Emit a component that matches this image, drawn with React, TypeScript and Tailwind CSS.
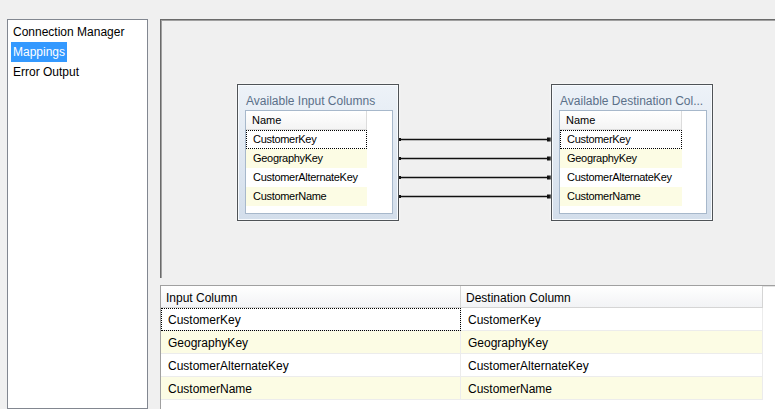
const menuItems = ["Connection Manager", "Mappings", "Error Output"];

const columns = [
  "CustomerKey",
  "GeographyKey",
  "CustomerAlternateKey",
  "CustomerName",
];

/* COLUMN BOX IN THE DIAGRAM */

function ColumnBox({ title, colWidth }: { title: string; colWidth: string }) {
  return (
    <div className="w-[162px] h-[137px] shrink-0 border border-[#4f5357] bg-gradient-to-b from-[#edf2f8] to-[#d3deeb] shadow-[inset_0_0_0_1px_#f8fbfe,0_0_2px_#ffffff] flex flex-col pl-[7px] pr-[5px] pb-[6px]">
      <div className="h-[25px] pt-[9px] pl-[1px] leading-[14px] text-[12px] text-[#5b7089] whitespace-nowrap overflow-hidden">
        {title}
      </div>

      <div className="flex-1 bg-white border border-[#a7b8cb]">
        <div
          className={`${colWidth} h-[19px] leading-[18px] pl-[6px] text-[11px] bg-gradient-to-b from-white to-[#f4f4f4] border-b border-r border-[#dcdcdc]`}
        >
          Name
        </div>

        {columns.map((name, i) => (
          <div
            key={name}
            className={`${colWidth} h-[19px] leading-[19px] pl-[7px] text-[11px] tracking-[-0.3px] ${
              i % 2 === 1 ? "bg-[#fcfce4]" : "bg-white"
            } ${
              i === 0
                ? "outline-1 outline-dotted outline-black -outline-offset-1"
                : ""
            }`}
          >
            {name}
          </div>
        ))}
      </div>
    </div>
  );
}

/* CONNECTOR LINES */

function Connectors() {
  const ys = [55.5, 74.5, 93.5, 112.5];

  return (
    <svg width="152" height="137" className="shrink-0">
      {ys.map((y) => (
        <g key={y}>
          <line x1="0" y1={y} x2="150" y2={y} stroke="#111" strokeWidth="1.4" />
          <rect x="0" y={y - 1.5} width="2" height="3" fill="#111" />
          <rect x="148" y={y - 2} width="4" height="4" fill="#111" />
        </g>
      ))}
    </svg>
  );
}

export default function App() {
  return (
    <div className="w-[775px] h-[409px] overflow-hidden bg-[#f0f0f0] flex pt-[19px] pl-[7px] font-['Liberation_Sans',Arial,sans-serif] text-[12px] text-black">

      {/* LEFT MENU */}

      <div className="w-[141px] h-[390px] shrink-0 bg-white border border-[#828790] pt-[2px]">
        {menuItems.map((item) => (
          <div key={item} className="h-[20px] leading-[20px] pl-[3px]">
            <span
              className={`px-[2px] inline-block ${
                item === "Mappings" ? "bg-[#3399ff] text-white" : ""
              }`}
            >
              {item}
            </span>
          </div>
        ))}
      </div>

      <div className="ml-[12px] flex-1 flex flex-col">

        {/* DIAGRAM CANVAS */}

        <div className="h-[259px] shrink-0 border-t border-l border-[#6a6a6a] shadow-[inset_1px_1px_0_#a0a0a0] pt-[64px] pl-[76px] flex items-start">
          <ColumnBox title="Available Input Columns" colWidth="w-[121px]" />
          <Connectors />
          <ColumnBox title="Available Destination Col..." colWidth="w-[122px]" />
        </div>

        {/* MAPPINGS GRID */}

        <div className="mt-[7px] flex-1 bg-white border-t border-l border-[#a0a0a0] shadow-[inset_0_1px_0_#e3e3e3]">
          <div className="flex h-[22px] w-[602px] bg-gradient-to-b from-white to-[#f2f3f5] border-b border-[#d5d5d5] leading-[24px]">
            <div className="w-[300px] pl-[5px] border-r border-[#d5d5d5]">
              Input Column
            </div>
            <div className="w-[302px] pl-[5px] border-r border-[#d5d5d5]">
              Destination Column
            </div>
          </div>

          {columns.map((name, i) => (
            <div
              key={name}
              className={`flex h-[23px] w-[602px] leading-[24px] ${
                i % 2 === 1 ? "bg-[#fcfce4]" : "bg-white"
              }`}
            >
              <div
                className={`w-[300px] pl-[7px] border-r border-b border-[#ececec] ${
                  i === 0
                    ? "outline-1 outline-dotted outline-black -outline-offset-1"
                    : ""
                }`}
              >
                {name}
              </div>
              <div className="w-[302px] pl-[7px] border-r border-b border-[#ececec]">
                {name}
              </div>
            </div>
          ))}
        </div>
      </div>
    </div>
  );
}
